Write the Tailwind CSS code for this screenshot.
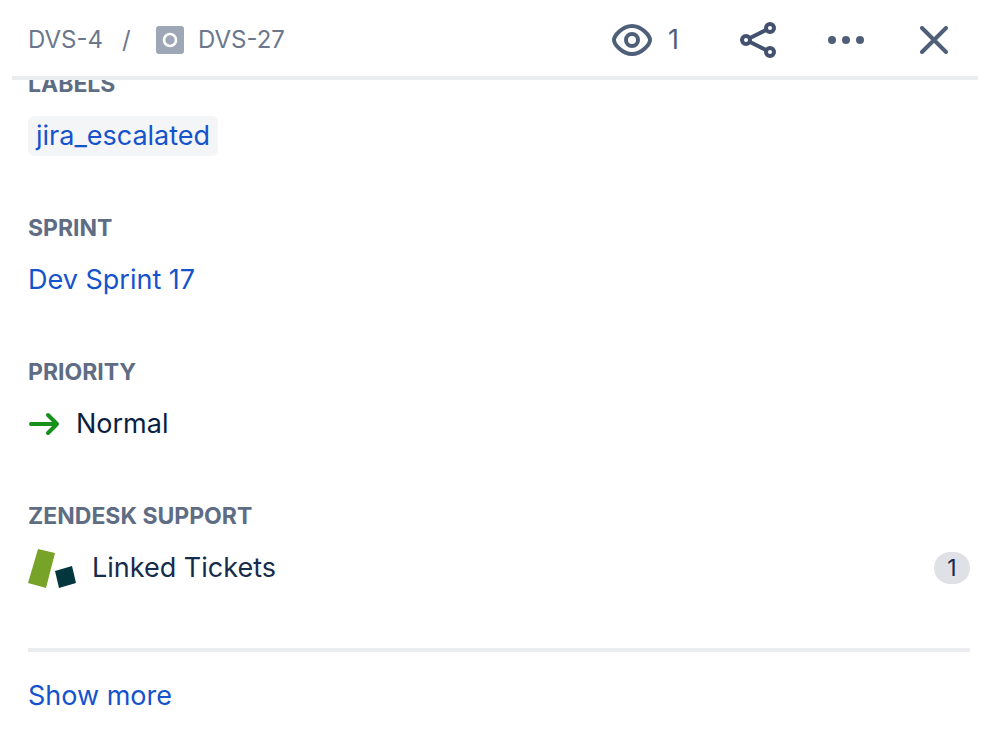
<!DOCTYPE html>
<html lang="en">
<head>
<meta charset="utf-8">
<meta name="viewport" content="width=device-width, initial-scale=1">
<title>DVS-27</title>
<script src="https://cdn.jsdelivr.net/npm/@tailwindcss/browser@4"></script>
</head>
<body class="bg-white font-['Inter',sans-serif] text-[27px] leading-10 text-[#172b4d]">
<header class="ml-3 mr-6 flex h-20 items-center justify-between border-b-4 border-[#ebecf0] pl-4 pr-[30px] pt-1 text-[#505f79]">
  <nav aria-label="Breadcrumb" class="flex items-center text-2xl text-[#6b778c]">
    <a href="#" class="w-[94px]">DVS-4</a>
    <span class="w-[34px]">/</span>
    <a href="#" class="flex items-center gap-[14px]">
      <svg class="size-7" viewBox="0 0 28 28" aria-hidden="true"><rect width="28" height="28" rx="3" fill="#9da7b5"/><circle cx="14" cy="14" r="6" fill="none" stroke="#fff" stroke-width="2.6"/></svg>
      DVS-27
    </a>
  </nav>
  <div class="flex items-center">
    <button type="button" aria-label="Watchers: 1" class="flex w-32 items-center gap-4">
      <svg class="h-8 w-10" viewBox="0 0 40 32" fill="none" stroke="currentColor" stroke-width="4" aria-hidden="true"><path d="M2 16C2 12 10 2 20 2s18 10 18 14-8 14-18 14S2 20 2 16Z"/><circle cx="20" cy="16" r="6"/></svg>
      <span>1</span>
    </button>
    <button type="button" aria-label="Share" class="w-22">
      <svg class="h-9 w-9" viewBox="0 0 36 36" fill="none" stroke="#42526e" stroke-width="4" aria-hidden="true"><path d="m10 16 16-8M10 20l16 8"/><circle cx="6" cy="18" r="4"/><circle cx="30" cy="6" r="4"/><circle cx="30" cy="30" r="4"/></svg>
    </button>
    <button type="button" aria-label="Actions" class="w-23">
      <svg class="h-2 w-9" viewBox="0 0 36 8" fill="currentColor" aria-hidden="true"><circle cx="4" cy="4" r="4"/><circle cx="18" cy="4" r="4"/><circle cx="32" cy="4" r="4"/></svg>
    </button>
    <button type="button" aria-label="Close">
      <svg class="size-7" viewBox="0 0 28 28" fill="none" stroke="currentColor" stroke-width="4" stroke-linecap="round" aria-hidden="true"><path d="m2 2 24 24M26 2 2 26"/></svg>
    </button>
  </div>
</header>
<main class="overflow-hidden pl-7 pr-8">
  <div class="-mt-3 flex flex-col gap-14">
    <section class="flex flex-col items-start gap-4">
      <h2 class="text-[23px] leading-8 font-bold text-[#5e6c84]">LABELS</h2>
      <a href="#" class="rounded-md bg-[#f4f5f7] px-2 text-[#1453cc]">jira_escalated</a>
    </section>
    <section class="flex flex-col items-start gap-4">
      <h2 class="text-[23px] leading-8 font-bold text-[#5e6c84]">SPRINT</h2>
      <a href="#" class="text-[#1453cc]">Dev Sprint 17</a>
    </section>
    <section class="flex flex-col gap-4">
      <h2 class="text-[23px] leading-8 font-bold text-[#5e6c84]">PRIORITY</h2>
      <div class="flex items-center gap-4 text-[#091e42]">
        <svg class="h-6 w-8" viewBox="0 0 32 24" fill="none" stroke="#17911b" stroke-width="4" stroke-linecap="round" stroke-linejoin="round" aria-hidden="true"><path d="M3 12h26M20 3l9 9-9 9"/></svg>
        <span>Normal</span>
      </div>
    </section>
    <section class="flex flex-col gap-4">
      <h2 class="text-[23px] leading-8 font-bold text-[#5e6c84]">ZENDESK SUPPORT</h2>
      <div class="flex items-center gap-4">
        <svg class="h-10 w-12" viewBox="0 0 48 40" aria-hidden="true"><path fill="#78a329" d="m10 1 17 4-9 35-18-5z"/><path fill="#03363d" d="m27 23 17-5 4 17-17 5z"/></svg>
        <span>Linked Tickets</span>
        <span class="ml-auto h-8 w-9 rounded-full bg-[#dfe1e6] text-center text-[23px] leading-8">1</span>
      </div>
    </section>
  </div>
  <hr class="mt-15 border-t-4 border-[#ebecf0]">
  <button type="button" class="mt-6 text-[#1453cc]">Show more</button>
</main>
</body>
</html>
